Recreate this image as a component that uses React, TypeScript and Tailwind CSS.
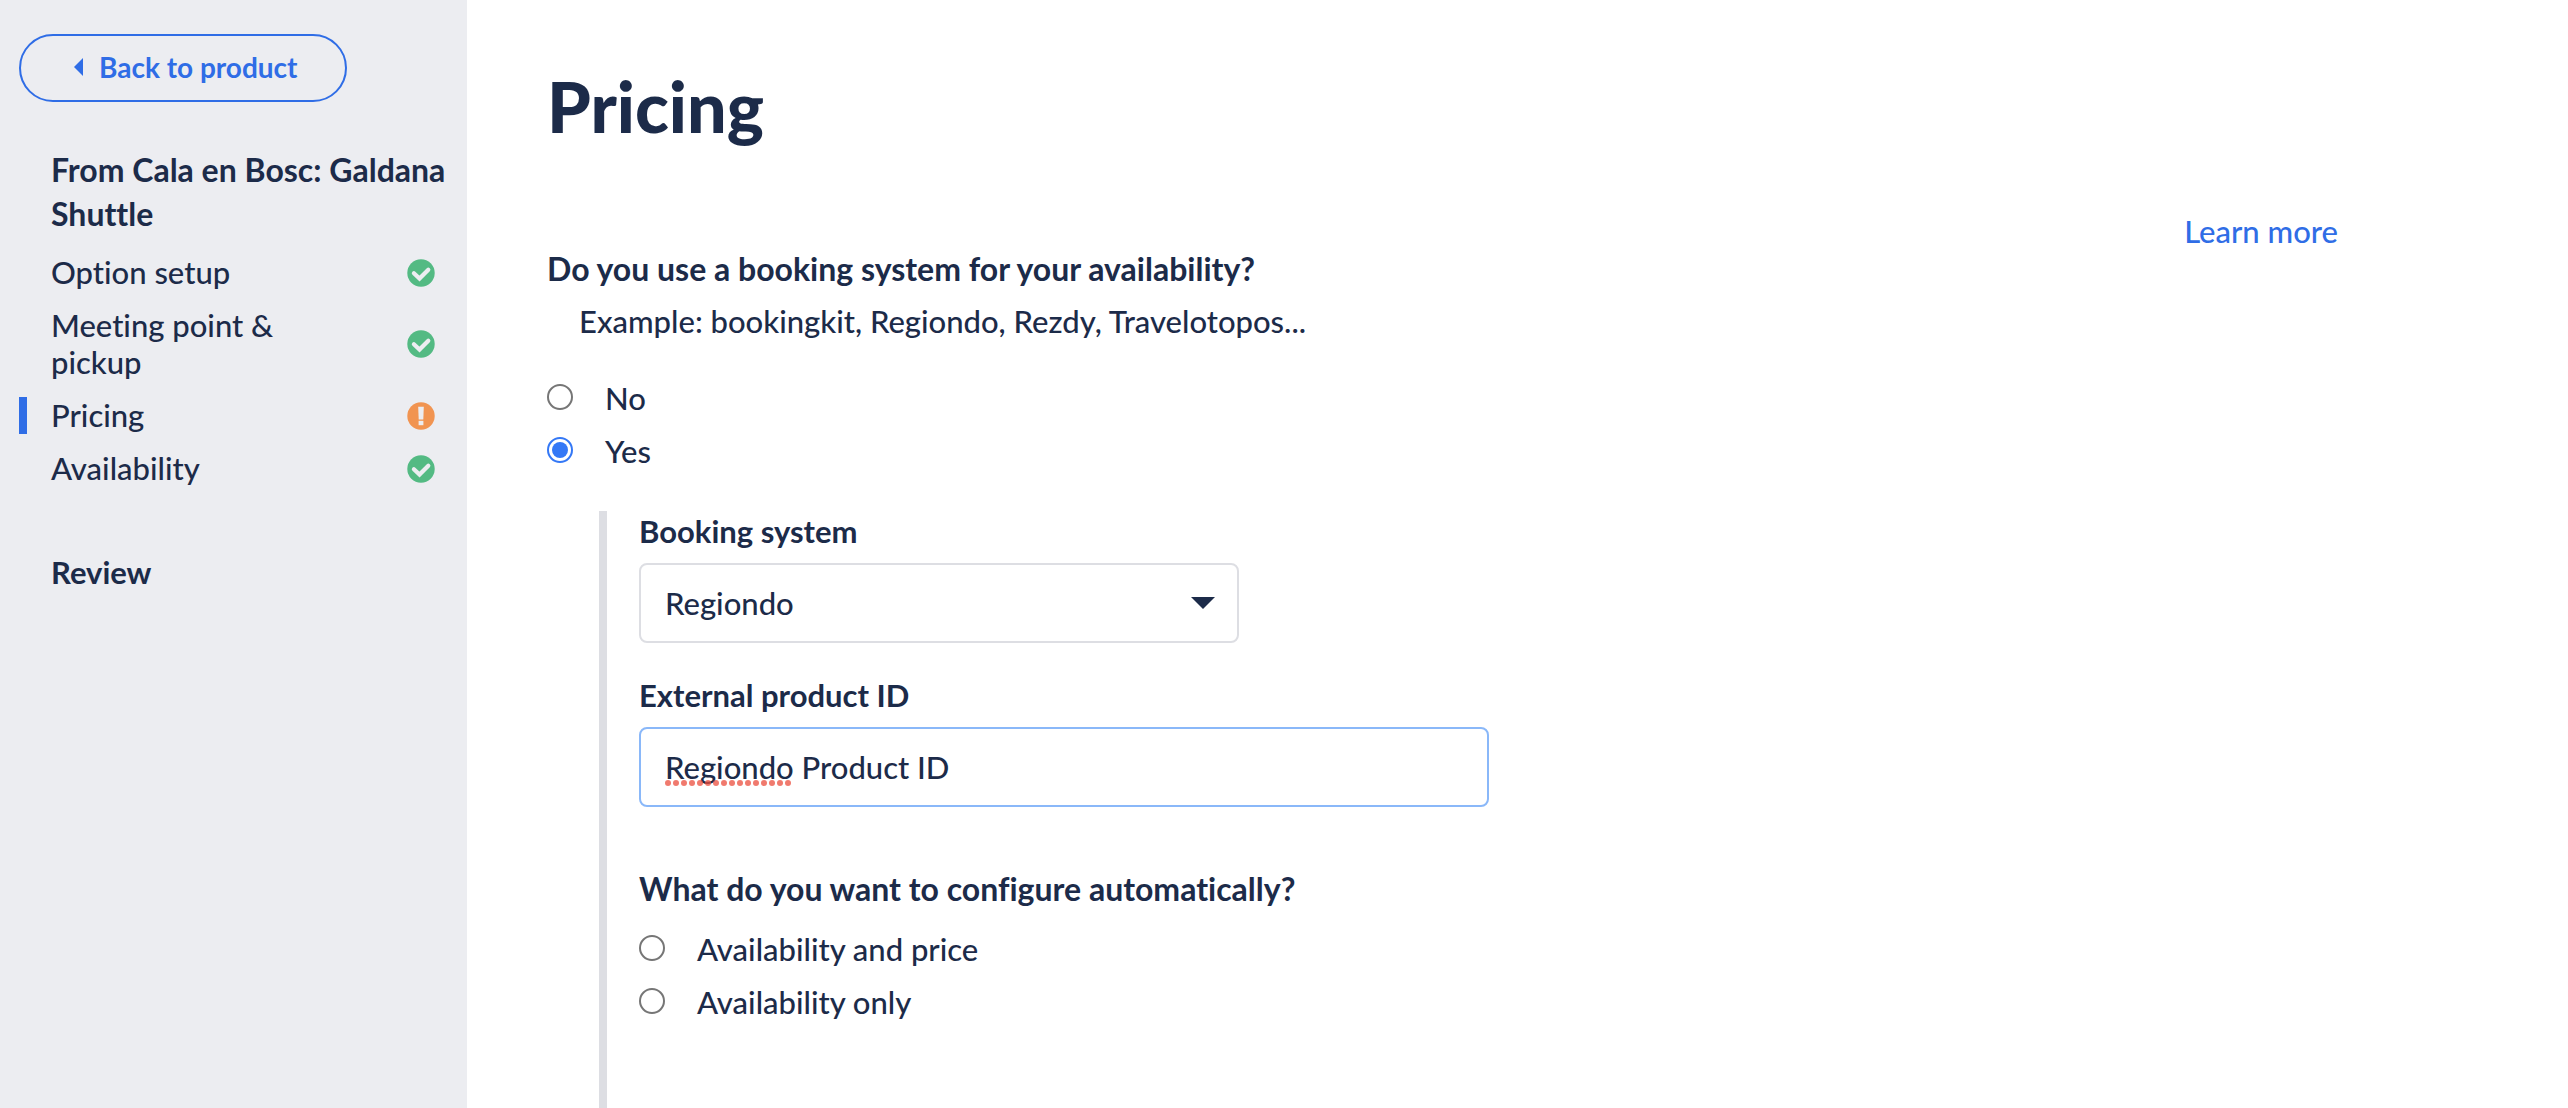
import { useState } from 'react';
import type { ReactNode } from 'react';
import clsx from 'clsx';

type StepStatus = 'done' | 'warning';

interface Step {
  label: string;
  status: StepStatus;
}

const steps: Step[] = [
  { label: 'Option setup', status: 'done' },
  { label: 'Meeting point & pickup', status: 'done' },
  { label: 'Pricing', status: 'warning' },
  { label: 'Availability', status: 'done' },
];

const StatusIcon = ({ status }: { status: StepStatus }) => {
  if (status === 'warning') {
    return (
      <svg viewBox="0 0 28 28" className="w-7 h-7 shrink-0" aria-label="Needs attention">
        <circle cx="14" cy="14" r="13.7" fill="#f19451" />
        <path d="M11.2 4.8h5.6l-.5 12.6h-4.6z" fill="#ecedf1" />
        <path d="M11.6 18.8h4.8v4.4h-4.8z" fill="#ecedf1" />
      </svg>
    );
  }

  return (
    <svg viewBox="0 0 28 28" className="w-7 h-7 shrink-0" aria-label="Complete">
      <circle cx="14" cy="14" r="13.7" fill="#53ba83" />
      <path
        d="M6.9 14.3l5.6 5.3 8.8-8.9"
        fill="none"
        stroke="#ecedf1"
        strokeWidth="4.2"
        strokeLinecap="round"
      />
    </svg>
  );
};

interface RadioProps {
  name: string;
  checked: boolean;
  onSelect: () => void;
  children: ReactNode;
}

const Radio = ({ name, checked, onSelect, children }: RadioProps) => (
  <label className="flex items-start gap-8 cursor-pointer">
    <input
      type="radio"
      name={name}
      checked={checked}
      onChange={onSelect}
      className={clsx(
        'appearance-none mt-1 w-[26px] h-[26px] shrink-0 rounded-full border-2 border-[#767676] bg-white',
        'flex items-center justify-center checked:border-[#3478f6]',
        "checked:before:content-[''] checked:before:w-4 checked:before:h-4 checked:before:rounded-full checked:before:bg-[#3478f6]"
      )}
    />
    {children}
  </label>
);

const Sidebar = () => (
  <aside className="w-[467px] shrink-0 bg-[#ecedf1] pl-[19px] pt-[34px]">
    <button
      type="button"
      className="flex items-center w-[328px] h-[68px] pl-[53px] pb-0.5 gap-4 rounded-full border-2 border-[#2f6de6] text-[#2f6de6] text-[28px] font-bold"
    >
      <svg viewBox="0 0 9 18" className="w-[9px] h-[18px]" fill="currentColor">
        <path d="M9 0v18L0 9z" />
      </svg>
      Back to product
    </button>

    <h2 className="mt-[46px] pl-8 text-[32px] leading-[44px] font-bold">
      From Cala en Bosc: Galdana Shuttle
    </h2>

    <nav className="mt-[18px] flex flex-col gap-4 pr-8">
      {steps.map((step) => (
        <a
          key={step.label}
          href="#"
          className={clsx(
            'flex items-center justify-between border-l-8 pl-6',
            step.label === 'Pricing' ? 'border-[#2f6de6]' : 'border-transparent'
          )}
        >
          <span className="max-w-[280px]">{step.label}</span>
          <StatusIcon status={step.status} />
        </a>
      ))}
    </nav>

    <a href="#" className="block mt-[67px] pl-8 font-bold">
      Review
    </a>
  </aside>
);

const App = () => {
  const [usesSystem, setUsesSystem] = useState(true);
  const [system, setSystem] = useState('Regiondo');
  const [productId, setProductId] = useState('Regiondo Product ID');
  const [mode, setMode] = useState('');

  return (
    <div className="flex min-h-screen bg-white font-['Lato',sans-serif] font-medium text-[31px] leading-[37px] text-[#1c2b49] [font-variant-ligatures:none]">
      <Sidebar />

      <main className="flex-1 flex flex-col pt-[62px] pl-20 pr-[230px]">
        <h1 className="text-[70px] leading-[88px] font-black">Pricing</h1>

        <div className="mt-[63px] flex justify-end">
          <a href="#" className="text-[#2f6de6]">
            Learn more
          </a>
        </div>

        <h2 className="text-[32px] leading-[37px] font-bold">
          Do you use a booking system for your availability?
        </h2>
        <p className="mt-4 pl-8">Example: bookingkit, Regiondo, Rezdy, Travelotopos...</p>

        <div className="mt-10 flex flex-col gap-4">
          <Radio name="uses-system" checked={!usesSystem} onSelect={() => setUsesSystem(false)}>
            No
          </Radio>
          <Radio name="uses-system" checked={usesSystem} onSelect={() => setUsesSystem(true)}>
            Yes
          </Radio>
        </div>

        {usesSystem && (
          <section className="flex-1 flex flex-col mt-[41px] ml-[52px] pl-8 pt-0.5 border-l-8 border-[#dddee3]">
            <label htmlFor="booking-system" className="font-bold">
              Booking system
            </label>
            <div className="relative mt-[13px] w-[600px]">
              <select
                id="booking-system"
                value={system}
                onChange={(e) => setSystem(e.target.value)}
                className="appearance-none w-full h-20 px-6 rounded-lg border-2 border-[#dddee3] bg-white"
              >
                <option>Regiondo</option>
                <option>bookingkit</option>
                <option>Rezdy</option>
                <option>Travelotopos</option>
              </select>
              <svg
                viewBox="0 0 24 12"
                className="absolute right-6 top-[34px] w-6 h-3 pointer-events-none"
                fill="currentColor"
              >
                <path d="M0 0h24L12 12z" />
              </svg>
            </div>

            <label htmlFor="product-id" className="mt-[34px] font-bold">
              External product ID
            </label>
            <div className="relative mt-[13px] w-[850px]">
              <input
                id="product-id"
                type="text"
                spellCheck={false}
                value={productId}
                onChange={(e) => setProductId(e.target.value)}
                className="w-full h-20 px-6 rounded-lg border-2 border-[#8ab8f9] bg-white outline-none"
              />
              {/* spelling marks under the first word */}
              <svg
                viewBox="0 0 126 6"
                className="absolute left-[26px] top-[53px] w-[126px] h-[6px] pointer-events-none"
              >
                {Array.from({ length: 16 }, (_, i) => (
                  <circle key={i} cx={3 + i * 8} cy="3" r="3" fill="#eb4e3d" fillOpacity="0.75" />
                ))}
              </svg>
            </div>

            <h3 className="mt-[63px] text-[32px] leading-[37px] font-bold">
              What do you want to configure automatically?
            </h3>
            <div className="mt-6 flex flex-col gap-4">
              <Radio name="mode" checked={mode === 'both'} onSelect={() => setMode('both')}>
                Availability and price
              </Radio>
              <Radio name="mode" checked={mode === 'only'} onSelect={() => setMode('only')}>
                Availability only
              </Radio>
            </div>
          </section>
        )}
      </main>
    </div>
  );
};

export default App;
